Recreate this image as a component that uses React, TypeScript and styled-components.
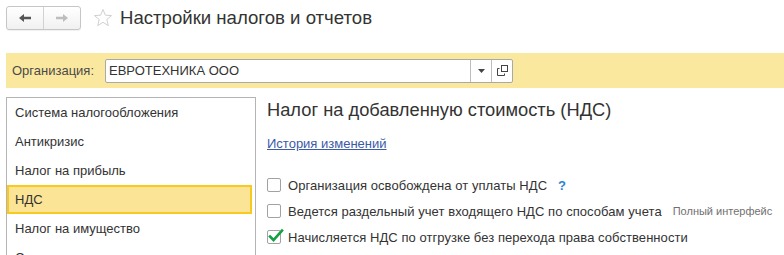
import React from 'react';
import styled, { createGlobalStyle } from 'styled-components';

const GlobalStyle = createGlobalStyle`
  html, body {
    margin: 0;
    padding: 0;
    background: #fff;
    overflow: hidden;
  }
  body {
    font-family: Arial, 'Liberation Sans', sans-serif;
    color: #333;
  }
`;

const Page = styled.div`
  width: 784px;
  height: 255px;
  overflow: hidden;
`;

const Header = styled.div`
  display: flex;
  align-items: center;
  padding: 6px 0 0 6px;
  height: 24px;
`;

const NavGroup = styled.div`
  display: flex;
  height: 22px;
  border: 1px solid #c6c6c6;
  border-radius: 3px;
  background: linear-gradient(#ffffff, #f1f1f1);
  box-shadow: 0 1px 1px rgba(0, 0, 0, 0.06);
`;

const NavButton = styled.div<{ $divider?: boolean }>`
  width: 36px;
  display: flex;
  align-items: center;
  justify-content: center;
  border-left: ${(p) => (p.$divider ? '1px solid #d2d2d2' : 'none')};
`;

const Star = styled.div`
  margin-left: 12px;
  width: 20px;
  height: 20px;
  display: flex;
  align-items: center;
`;

const Title = styled.div`
  margin-left: 7px;
  font-size: 18.6px;
  line-height: 22px;
  color: #333;
  margin-top: -1px;
`;

const OrgBar = styled.div`
  margin: 23px 0 0 6px;
  height: 35px;
  background: #fbe89f;
  display: flex;
  align-items: center;
  padding-left: 6px;
`;

const OrgLabel = styled.span`
  font-size: 13px;
  color: #4a4a4a;
  width: 93px;
`;

const InputBox = styled.div`
  display: flex;
  width: 406px;
  height: 22px;
  border: 1px solid #a9a9a9;
  border-radius: 2px;
  background: #fff;
`;

const InputText = styled.div`
  flex: 1;
  padding-left: 3px;
  font-size: 13px;
  line-height: 22px;
  color: #333;
`;

const InputButton = styled.div`
  width: 20px;
  border-left: 1px solid #bdbdbd;
  display: flex;
  align-items: center;
  justify-content: center;
`;

const Body = styled.div`
  display: flex;
  margin-top: 9px;
  padding-left: 6px;
`;

const SideList = styled.div`
  width: 248px;
  height: 200px;
  border: 1px solid #b4b4b4;
  border-bottom: none;
  flex-shrink: 0;
`;

const SideItem = styled.div<{ $active?: boolean }>`
  height: ${(p) => (p.$active ? '25px' : '29px')};
  margin-right: ${(p) => (p.$active ? '3px' : '0')};
  padding-left: ${(p) => (p.$active ? '6px' : '8px')};
  display: flex;
  align-items: center;
  font-size: 13px;
  color: #333;
  background: ${(p) => (p.$active ? '#fbe496' : 'transparent')};
  border: ${(p) => (p.$active ? '2px solid #f8c91e' : 'none')};
`;

const Content = styled.div`
  margin-left: 11px;
  padding-top: 2px;
`;

const Heading = styled.div`
  font-size: 18.3px;
  line-height: 22px;
  color: #333;
`;

const HistoryLink = styled.a`
  display: inline-block;
  margin-top: 15px;
  font-size: 13px;
  line-height: 16px;
  color: #3b5aa8;
  text-decoration: underline;
`;

const Options = styled.div`
  margin-top: 20px;
  display: flex;
  flex-direction: column;
`;

const OptionRow = styled.div`
  display: flex;
  align-items: center;
  height: 26px;
`;

const Box = styled.div`
  position: relative;
  width: 12px;
  height: 12px;
  border: 1px solid #a2a2a2;
  border-radius: 2px;
  background: #fff;
  margin-right: 7px;
  flex-shrink: 0;
`;

const Tick = styled.svg`
  position: absolute;
  left: 0;
  top: -3px;
`;

const OptionLabel = styled.span`
  font-size: 13px;
  letter-spacing: 0.06px;
  color: #333;
`;

const Help = styled.span`
  margin-left: 11px;
  font-size: 13px;
  font-weight: bold;
  color: #2a84d2;
`;

const Hint = styled.span`
  margin-left: 11px;
  font-size: 11px;
  color: #707070;
`;

const sideItems = [
  'Система налогообложения',
  'Антикризис',
  'Налог на прибыль',
  'НДС',
  'Налог на имущество',
  'Страховые взносы',
];

const Checkbox: React.FC<{ checked?: boolean }> = ({ checked }) => (
  <Box>
    {checked && (
      <Tick width="16" height="15" viewBox="0 0 16 15">
        <path d="M2 8.5 L5.5 12 L14 2.5" fill="none" stroke="#14a044" strokeWidth="2.6" strokeLinecap="square" />
      </Tick>
    )}
  </Box>
);

export default function App() {
  return (
    <Page>
      <GlobalStyle />
      <Header>
        <NavGroup>
          <NavButton>
            <svg width="14" height="10" viewBox="0 0 14 10">
              <path d="M1 5 L6 1 L6 3.8 L13 3.8 L13 6.2 L6 6.2 L6 9 Z" fill="#555" />
            </svg>
          </NavButton>
          <NavButton $divider>
            <svg width="14" height="10" viewBox="0 0 14 10">
              <path d="M13 5 L8 1 L8 3.8 L1 3.8 L1 6.2 L8 6.2 L8 9 Z" fill="#bdbdbd" />
            </svg>
          </NavButton>
        </NavGroup>
        <Star>
          <svg width="20" height="20" viewBox="0 0 20 20">
            <path
              d="M10 1.5 L12.4 7.2 L18.5 7.6 L13.8 11.5 L15.3 17.6 L10 14.3 L4.7 17.6 L6.2 11.5 L1.5 7.6 L7.6 7.2 Z"
              fill="none"
              stroke="#d0d0d0"
              strokeWidth="1"
            />
          </svg>
        </Star>
        <Title>Настройки налогов и отчетов</Title>
      </Header>

      <OrgBar>
        <OrgLabel>Организация:</OrgLabel>
        <InputBox>
          <InputText>ЕВРОТЕХНИКА ООО</InputText>
          <InputButton>
            <svg width="7" height="4" viewBox="0 0 7 4">
              <path d="M0 0 H7 L3.5 4 Z" fill="#444" />
            </svg>
          </InputButton>
          <InputButton>
            <svg width="11" height="11" viewBox="0 0 11 11">
              <rect x="4.5" y="0.5" width="6" height="6" fill="none" stroke="#444" strokeWidth="1" />
              <path d="M2.5 3.5 H0.5 V10.5 H7.5 V8.5" fill="none" stroke="#444" strokeWidth="1" />
            </svg>
          </InputButton>
        </InputBox>
      </OrgBar>

      <Body>
        <SideList>
          {sideItems.map((item) => (
            <SideItem key={item} $active={item === 'НДС'}>
              {item}
            </SideItem>
          ))}
        </SideList>
        <Content>
          <Heading>Налог на добавленную стоимость (НДС)</Heading>
          <HistoryLink href="#">История изменений</HistoryLink>
          <Options>
            <OptionRow>
              <Checkbox />
              <OptionLabel>Организация освобождена от уплаты НДС</OptionLabel>
              <Help>?</Help>
            </OptionRow>
            <OptionRow>
              <Checkbox />
              <OptionLabel>Ведется раздельный учет входящего НДС по способам учета</OptionLabel>
              <Hint>Полный интерфейс</Hint>
            </OptionRow>
            <OptionRow>
              <Checkbox checked />
              <OptionLabel>Начисляется НДС по отгрузке без перехода права собственности</OptionLabel>
            </OptionRow>
          </Options>
        </Content>
      </Body>
    </Page>
  );
}
